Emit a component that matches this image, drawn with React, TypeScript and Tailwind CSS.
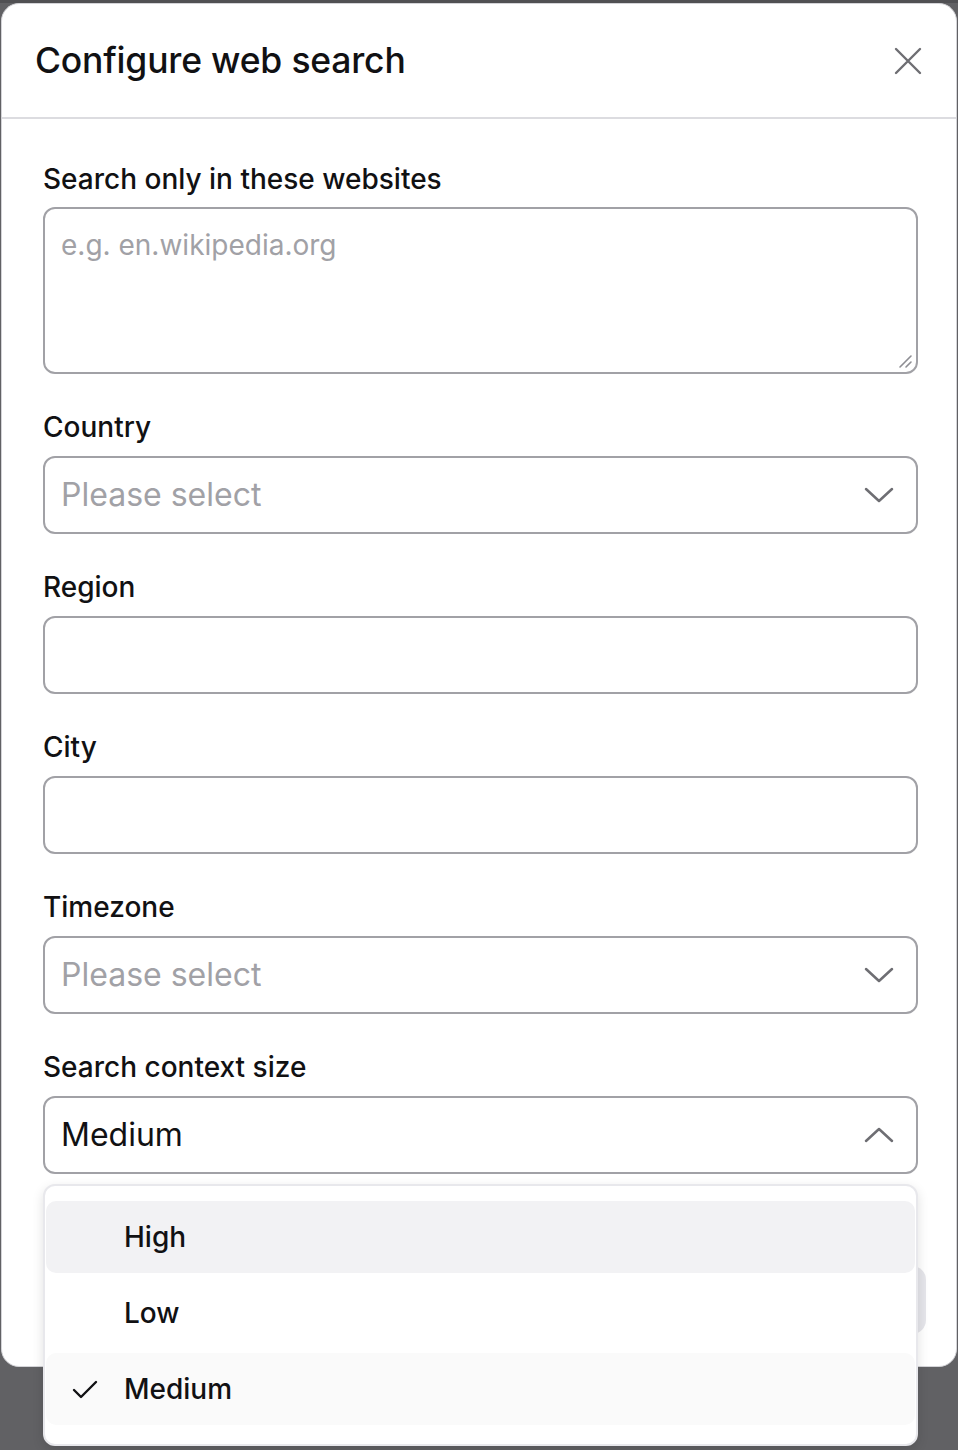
import React from "react";

const Chevron = ({ up = false }: { up?: boolean }) => (
  <svg width="30" height="18" viewBox="0 0 30 18" fill="none" className="shrink-0">
    <path
      d={up ? "M2 15 L15 3 L28 15" : "M2 3 L15 15 L28 3"}
      stroke="#6e6e73"
      strokeWidth="2.5"
      strokeLinecap="round"
      strokeLinejoin="round"
    />
  </svg>
);

const Label = ({ children }: { children: React.ReactNode }) => (
  <div className="text-[28px] leading-[36px] font-medium text-[#111113]">{children}</div>
);

const SelectBox = ({ value, placeholder, up }: { value?: string; placeholder?: string; up?: boolean }) => (
  <div className="mt-[11px] h-[78px] rounded-[12px] border-2 border-[#a1a1a6] bg-white flex items-center justify-between pl-[16px] pr-[22px]">
    {value ? (
      <span className="text-[32px] text-[#111113]">{value}</span>
    ) : (
      <span className="text-[32px] text-[#a1a1a6]">{placeholder}</span>
    )}
    <Chevron up={up} />
  </div>
);

const InputBox = () => (
  <div className="mt-[11px] h-[78px] rounded-[12px] border-2 border-[#a1a1a6] bg-white" />
);

export default function App() {
  return (
    <div
      className="relative w-[958px] h-[1450px] overflow-hidden bg-[#616164]"
      style={{ fontFamily: "Inter, 'Noto Sans', sans-serif" }}
    >
      <div className="h-[3px] bg-[#505053]" />
      <div className="absolute left-[1px] top-[3px] w-[956px] h-[1364px] rounded-[18px] bg-white border border-[#d4d4d8]">
        <div className="h-[115px] flex items-center justify-between pl-[33px] pr-[34px] border-b-2 border-[#dcdce0]">
          <div className="text-[35.5px] font-medium text-[#111113] tracking-[-0.2px]">Configure web search</div>
          <svg width="28" height="28" viewBox="0 0 28 28" fill="none">
            <path d="M2 2 L26 26 M26 2 L2 26" stroke="#6e6e73" strokeWidth="2.4" strokeLinecap="round" />
          </svg>
        </div>
        <div className="pl-[41px] pr-[38px] pt-[42px]">
          <Label>Search only in these websites</Label>
          <div className="relative mt-[10px] h-[167px] rounded-[12px] border-2 border-[#a1a1a6] bg-white pl-[16px] pt-[18px]">
            <span className="text-[28px] leading-[36px] text-[#a1a1a6]">e.g. en.wikipedia.org</span>
            <svg className="absolute right-[3px] bottom-[3px]" width="16" height="16" viewBox="0 0 16 16" fill="none">
              <path d="M3 14 L14 3 M9 14 L14 9" stroke="#8e8e93" strokeWidth="1.6" strokeLinecap="round" />
            </svg>
          </div>
          <div className="mt-[35px]">
            <Label>Country</Label>
            <SelectBox placeholder="Please select" />
          </div>
          <div className="mt-[35px]">
            <Label>Region</Label>
            <InputBox />
          </div>
          <div className="mt-[35px]">
            <Label>City</Label>
            <InputBox />
          </div>
          <div className="mt-[35px]">
            <Label>Timezone</Label>
            <SelectBox placeholder="Please select" />
          </div>
          <div className="mt-[35px]">
            <Label>Search context size</Label>
            <SelectBox value="Medium" up />
          </div>
        </div>
        <div className="absolute right-[30px] top-[1262px] w-[120px] h-[68px] rounded-[14px] bg-[#e5e5ea]" />
      </div>
      <div className="absolute left-[43px] top-[1184px] w-[875px] h-[262px] rounded-[12px] bg-white border-2 border-[#e8e8ec] shadow-[0_4px_12px_rgba(0,0,0,0.12)] px-[1px] pt-[15px]">
        <div className="flex flex-col gap-[4px]">
          <div className="h-[72px] rounded-[10px] bg-[#f2f2f4] flex items-center pl-[78px]">
            <span className="text-[28px] font-medium text-[#111113]">High</span>
          </div>
          <div className="h-[72px] rounded-[10px] flex items-center pl-[78px]">
            <span className="text-[28px] font-medium text-[#111113]">Low</span>
          </div>
          <div className="relative h-[72px] rounded-[10px] bg-[#fafafa] flex items-center pl-[78px]">
            <svg className="absolute left-[26px] top-[27px]" width="26" height="20" viewBox="0 0 26 20" fill="none">
              <path d="M2 10 L9 17 L24 2" stroke="#111113" strokeWidth="2.4" strokeLinecap="round" strokeLinejoin="round" />
            </svg>
            <span className="text-[28px] font-medium text-[#111113]">Medium</span>
          </div>
        </div>
      </div>
    </div>
  );
}
